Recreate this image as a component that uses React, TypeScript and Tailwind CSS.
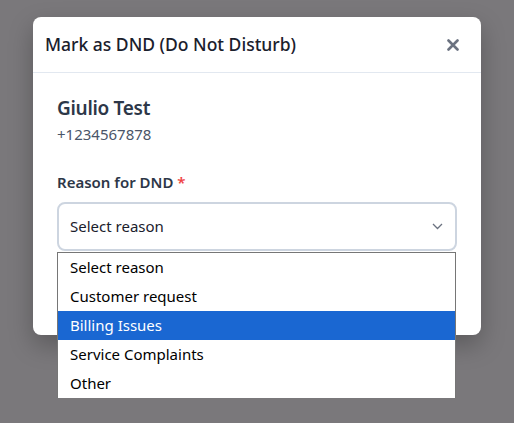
import React from "react";

const options = ["Select reason", "Customer request", "Billing Issues", "Service Complaints", "Other"];

export default function App() {
  return (
    <div
      className="w-full h-[423px] bg-[#7a787b] flex justify-center pt-[17px] overflow-hidden"
      style={{ fontFamily: '"Noto Sans", "Open Sans", sans-serif' }}
    >
      <div className="relative w-[448px] h-[318px] bg-white rounded-lg shadow-[0_10px_25px_rgba(0,0,0,0.25)] flex flex-col">
        <div className="h-[56px] flex items-center justify-between pl-3 pr-[22px] border-b border-[#e2e8f0]">
          <h2 className="text-[17.5px] font-medium text-[#1a202c]">Mark as DND (Do Not Disturb)</h2>
          <button className="w-3 h-3 flex items-center justify-center text-[#6b7280]">
            <svg width="12" height="12" viewBox="0 0 12 12" fill="none" stroke="currentColor" strokeWidth="2.6" strokeLinecap="round">
              <path d="M1.5 1.5 L10.5 10.5 M10.5 1.5 L1.5 10.5" />
            </svg>
          </button>
        </div>
        <div className="px-6 pt-[21px] flex flex-col">
          <div className="text-[19px] leading-[28px] font-semibold text-[#2d3748] tracking-[-0.3px]">Giulio Test</div>
          <div className="text-[15px] leading-[22px] text-[#4a5568] mt-[1px]">+1234567878</div>
          <label className="mt-[26px] text-[15px] leading-[22px] font-semibold text-[#2d3748]">
            Reason for DND <span className="text-[#ef4444]">*</span>
          </label>
          <div className="relative mt-[9px]">
            <div className="h-[49px] w-full border-2 border-[#cdd5e0] rounded-lg flex items-center justify-between pl-[11px] pr-[12px]">
              <span className="text-[15px] text-[#1a202c]">Select reason</span>
              <svg width="11" height="7" viewBox="0 0 11 7" fill="none" stroke="#6b7280" strokeWidth="1.3">
                <path d="M1 1 L5.5 5.5 L10 1" />
              </svg>
            </div>
            <div className="absolute left-0 top-[50px] w-[399px] bg-white border border-[#767676] border-b-0 z-10">
              {options.map((o) => (
                <div
                  key={o}
                  className={
                    "h-[29px] flex items-center pl-3 text-[15px] " +
                    (o === "Billing Issues" ? "bg-[#1a67d2] text-white" : "text-black")
                  }
                >
                  {o}
                </div>
              ))}
            </div>
          </div>
        </div>
      </div>
    </div>
  );
}
